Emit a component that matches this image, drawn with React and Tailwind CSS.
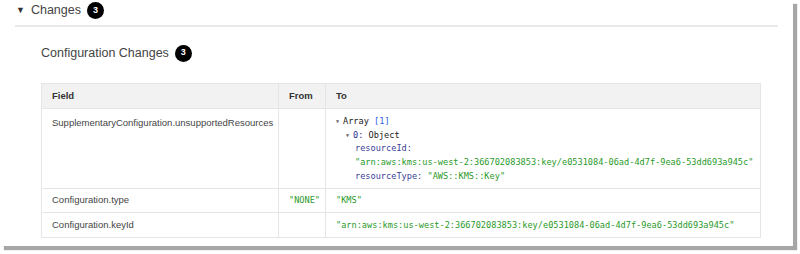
import React from "react";

const Badge = ({ n }) => (
  <span className="inline-flex h-[17px] w-[17px] items-center justify-center rounded-full bg-black text-[9px] font-bold text-white">
    {n}
  </span>
);

const Caret = () => (
  <span className="mr-[4px] inline-block align-[1px] text-[5px] text-[#666]">▼</span>
);

const mono = "font-['DejaVu_Sans_Mono',monospace] text-[8.6px] whitespace-nowrap";

const App = () => {
  return (
    <div className="h-[254px] w-[800px] bg-white font-['Liberation_Sans',Arial,sans-serif]">
      <div className="h-[246px] w-[793px] bg-white shadow-[4px_4px_1px_rgba(0,0,0,0.35)]">
        <div className="mx-[15px] flex h-[27px] items-center gap-[6px] border-b-2 border-[#e9e9e9] pb-[4px]">
          <span className="ml-[1px] text-[9px] text-[#333]">▼</span>
          <span className="text-[12.5px] text-[#444]">Changes</span>
          <Badge n="3" />
        </div>

        <div className="pl-[41px]">
          <div className="flex h-[52px] items-center gap-[6px]">
            <span className="text-[12.5px] text-[#444]">Configuration Changes</span>
            <Badge n="3" />
          </div>

          <table className="mt-[4px] w-[720px] table-fixed border-collapse border border-[#e5e5e5] text-[9.5px] text-[#444]">
            <colgroup>
              <col className="w-[237px]" />
              <col className="w-[47px]" />
              <col />
            </colgroup>
            <thead>
              <tr className="h-[25px] bg-[#f2f2f2] text-left">
                <th className="border border-[#e5e5e5] px-[10px] font-bold text-[#333]">Field</th>
                <th className="border border-[#e5e5e5] px-[10px] font-bold text-[#333]">From</th>
                <th className="border border-[#e5e5e5] px-[10px] font-bold text-[#333]">To</th>
              </tr>
            </thead>
            <tbody>
              <tr className="h-[80px] align-top">
                <td className="border border-[#e5e5e5] px-[10px] pt-[7px]">SupplementaryConfiguration.unsupportedResources</td>
                <td className="border border-[#e5e5e5]"></td>
                <td className={`border border-[#e5e5e5] px-[10px] pt-[6px] leading-[13.7px] text-[#1a1a1a] ${mono}`}>
                  <div><Caret />Array <span className="text-[#2a5fe0]">[1]</span></div>
                  <div className="pl-[10px]"><Caret /><span className="text-[#2b2f8f]">0:</span> Object</div>
                  <div className="pl-[19px] text-[#3b3f9a]">resourceId:</div>
                  <div className="pl-[19px] text-[#2a9a2a]">"arn:aws:kms:us-west-2:366702083853:key/e0531084-06ad-4d7f-9ea6-53dd693a945c"</div>
                  <div className="pl-[19px]"><span className="text-[#3b3f9a]">resourceType:</span> <span className="text-[#2a9a2a]">"AWS::KMS::Key"</span></div>
                </td>
              </tr>
              <tr className="h-[24px]">
                <td className="border border-[#e5e5e5] px-[10px]">Configuration.type</td>
                <td className={`border border-[#e5e5e5] px-[10px] text-[#2a9a2a] ${mono}`}>"NONE"</td>
                <td className={`border border-[#e5e5e5] px-[10px] text-[#2a9a2a] ${mono}`}>"KMS"</td>
              </tr>
              <tr className="h-[25px]">
                <td className="border border-[#e5e5e5] px-[10px]">Configuration.keyId</td>
                <td className="border border-[#e5e5e5]"></td>
                <td className={`border border-[#e5e5e5] px-[10px] text-[#2a9a2a] ${mono}`}>"arn:aws:kms:us-west-2:366702083853:key/e0531084-06ad-4d7f-9ea6-53dd693a945c"</td>
              </tr>
            </tbody>
          </table>
        </div>
      </div>
    </div>
  );
};

export default App;
